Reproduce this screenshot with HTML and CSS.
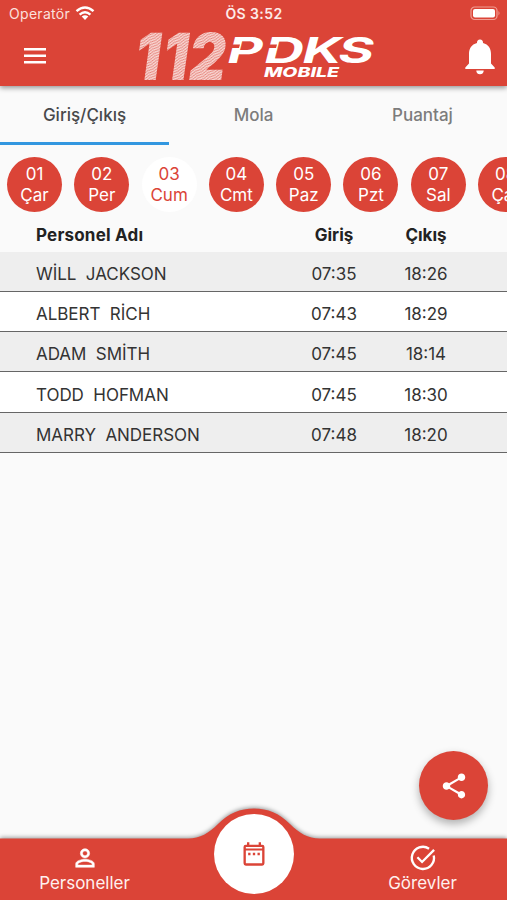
FILE: index.html
```html
<!DOCTYPE html>
<html lang="tr">
<head>
<meta charset="utf-8">
<meta name="viewport" content="width=device-width, initial-scale=1">
<title>112 PDKS Mobile</title>
<link rel="stylesheet" href="styles.css">
</head>
<body>
<div class="app">
  <header class="topbar">
    <div class="status">
      <div class="carrier"><span>Operatör</span>
        <svg width="20" height="15" viewBox="0 0 20 15" fill="none" stroke="#fff" stroke-width="2.4"><path d="M1.500 5.200Q10 -2.400 18.500 5.200M4.600 8.600Q10 3.900 15.400 8.600"/><path d="M10 14L6.700 10.600Q10 7.800 13.300 10.600Z" fill="#fff" stroke="none"/></svg>
      </div>
      <span class="clock">ÖS 3:52</span>
      <svg class="battery" width="31" height="15" viewBox="0 0 31 15"><rect x="1" y="1" width="26" height="12.5" rx="3.6" fill="none" stroke="#f09d94" stroke-width="1.2"/><rect x="3" y="3" width="22" height="8.500" rx="2" fill="#fff"/><path d="M28.500 5Q30.500 7.200 28.500 9.500Z" fill="#f09d94"/></svg>
    </div>
    <div class="brandrow">
      <svg class="menu" width="22" height="16" viewBox="0 0 22 16" fill="#fff"><path d="M0 0h22v2.500H0zM0 6.500h22V9H0zM0 13h22v2.500H0z"/></svg>
      <svg class="logo" width="244" height="54" viewBox="0 0 244 54">
        <defs>
          <pattern id="ridges" width="12" height="2.6" patternUnits="userSpaceOnUse" patternTransform="rotate(-28)"><rect width="12" height="2.6" fill="#f8d6d2"/><path d="M0 1.300Q3 .1 6 1.300T12 1.300" fill="none" stroke="#e0695f" stroke-width=".8"/></pattern>
        </defs>
        <text class="digits" transform="translate(-1.500 49.500) skewX(-8) scale(.88 1)" x="-3.500 28 58" y="0" fill="url(#ridges)">112</text>
        <text class="pdks" transform="translate(90.500 32.500) scale(1.56 1)" x="0 23.700 48 71" y="0">PDKS</text>
        <path d="M90 14.500H103L102 18H89ZM127 14.500H140L139 18H126Z" fill="#db4437"/>
        <text class="mobile" x="127" y="46.500" textLength="75" lengthAdjust="spacingAndGlyphs">MOBILE</text>
      </svg>
      <svg class="bell" width="30" height="36" viewBox="0 0 30 36" fill="#fff"><path d="M15 .5A3 3 0 0 1 18 4C23.500 5.400 26 9.500 26 15V24.500L29.700 28.500V30H.3V28.500L4 24.500V15C4 9.500 6.500 5.400 12 4A3 3 0 0 1 15 .5ZM11.300 31.500H18.700A3.700 3.700 0 0 1 11.300 31.500Z"/></svg>
    </div>
  </header>
  <nav class="tabs"><span class="tab active">Giriş/Çıkış</span><span class="tab">Mola</span><span class="tab">Puantaj</span></nav>
  <div class="days">
    <div class="day"><span>01</span><span>Çar</span></div>
    <div class="day"><span>02</span><span>Per</span></div>
    <div class="day selected"><span>03</span><span>Cum</span></div>
    <div class="day"><span>04</span><span>Cmt</span></div>
    <div class="day"><span>05</span><span>Paz</span></div>
    <div class="day"><span>06</span><span>Pzt</span></div>
    <div class="day"><span>07</span><span>Sal</span></div>
    <div class="day"><span>08</span><span>Çar</span></div>
  </div>
  <main class="list">
    <div class="row head"><span>Personel Adı</span><span>Giriş</span><span>Çıkış</span></div>
    <div class="row"><span>WİLL&nbsp; JACKSON</span><span>07:35</span><span>18:26</span></div>
    <div class="row"><span>ALBERT&nbsp; RİCH</span><span>07:43</span><span>18:29</span></div>
    <div class="row"><span>ADAM&nbsp; SMİTH</span><span>07:45</span><span>18:14</span></div>
    <div class="row"><span>TODD&nbsp; HOFMAN</span><span>07:45</span><span>18:30</span></div>
    <div class="row"><span>MARRY&nbsp; ANDERSON</span><span>07:48</span><span>18:20</span></div>
  </main>
  <button class="share" aria-label="Paylaş"><svg width="30" height="30" viewBox="0 0 24 24" fill="#fff"><path d="M18 16.080c-.76 0-1.440.3-1.960.77L8.910 12.700c.05-.23.090-.46.090-.7s-.04-.47-.09-.7l7.050-4.110c.54.5 1.250.81 2.040.81 1.660 0 3-1.340 3-3s-1.340-3-3-3-3 1.340-3 3c0 .24.040.47.090.7L8.040 9.810C7.500 9.310 6.790 9 6 9c-1.660 0-3 1.340-3 3s1.340 3 3 3c.79 0 1.500-.31 2.040-.81l7.120 4.160c-.05.21-.08.43-.08.650 0 1.610 1.310 2.920 2.920 2.920s2.920-1.310 2.920-2.920-1.310-2.920-2.920-2.920z"/></svg></button>
  <footer class="bottom">
    <svg class="hump" width="507" height="96" viewBox="0 0 507 96"><path d="M0 34.500H188C200 34.500 209 29 218 20C229 9 240 4.500 254 4.500S279 9 290 20C299 29 308 34.500 320 34.500H507V96H0Z" fill="#db4437"/></svg>
    <div class="item"><svg width="28" height="28" viewBox="0 0 24 24" fill="#fff" stroke="#fff" stroke-width=".4"><path d="M12 5.900a2.100 2.100 0 1 1 0 4.200 2.100 2.100 0 0 1 0-4.200m0 9c2.970 0 6.100 1.460 6.100 2.100v1.100H5.900V17c0-.64 3.130-2.100 6.100-2.100M12 4C9.790 4 8 5.790 8 8s1.790 4 4 4 4-1.790 4-4-1.790-4-4-4zm0 9c-2.670 0-8 1.340-8 4v3h16v-3c0-2.660-5.330-4-8-4z"/></svg><span>Personeller</span></div>
    <div class="center"><svg width="28" height="28" viewBox="0 0 24 24" fill="#db4437"><path fill-rule="evenodd" d="M7 11h2v2H7zm4 0h2v2h-2zm4 0h2v2h-2zM19 4h-1V2h-2v2H8V2H6v2H5a2 2 0 0 0-2 2v14a2 2 0 0 0 2 2h14a2 2 0 0 0 2-2V6a2 2 0 0 0-2-2zM19 20H5V9h14zM19 7.300H5V6h14z"/></svg></div>
    <div class="item"><svg width="28" height="28" viewBox="0 0 24 24" fill="none" stroke="#fff" stroke-width="2"><path d="M21.200 9.800A9.500 9.500 0 1 1 17.200 4M7.200 11.400l4 4L21.500 5"/></svg><span>Görevler</span></div>
  </footer>
</div>
</body>
</html>
```

FILE: styles.css
```css
* { box-sizing: border-box; }
body { margin: 0; font-family: Inter, "Liberation Sans", sans-serif; background: #fafafa; color: #333; }
.app { width: 507px; height: 900px; overflow: hidden; position: relative; display: flex; flex-direction: column; }
.topbar { height: 86px; flex: none; background: #db4437; box-shadow: 0 2px 5px rgba(0,0,0,.4); color: #fff; z-index: 1; }
.status { height: 28px; display: grid; grid-template-columns: 1fr auto 1fr; align-items: center; padding: 0 8px 1px 9px; font-size: 14px; }
.carrier { display: flex; gap: 5px; align-items: center; color: #fbe0dd; letter-spacing: .3px; }
.clock { font-weight: 600; color: #fdeae8; letter-spacing: .4px; }
.battery { justify-self: end; margin-right: -2px; }
.brandrow { height: 58px; display: flex; padding: 2px 12px 0 24px; }
.menu { margin-top: 18px; }
.logo { margin-left: 91px; overflow: visible; }
.bell { margin: 9px 0 0 auto; }
.digits { font: 900 65px Inter, sans-serif; }
.pdks { font: italic 700 35px Inter, sans-serif; fill: #fff; }
.mobile { font: italic 800 13.5px Inter, sans-serif; fill: #fff; }
.tabs { height: 59px; flex: none; display: flex; }
.tab { flex: 1; display: flex; align-items: center; justify-content: center; padding-top: 1px; font-size: 17px; font-weight: 500; color: #7c7c7c; border-bottom: 3px solid transparent; }
.active { color: #48494b; border-color: #3297e0; }
.days { height: 72px; flex: none; display: flex; gap: 12.3px; padding: 12px 0 0 7px; overflow: hidden; }
.day { width: 55px; height: 55px; flex: none; border-radius: 50%; background: #db4437; color: #fff; display: flex; flex-direction: column; align-items: center; justify-content: center; padding-top: 1px; font-size: 17px; line-height: 21px; }
.selected { background: #fff; color: #db4437; }
.list { flex: none; }
.row { height: 40.3px; display: grid; grid-template-columns: 288px 92px 92px; padding-left: 36px; align-items: center; font-size: 17px; border-bottom: 1px solid #666; padding-top: 5px; background: #eee; }
.row:nth-child(odd) { background: #fff; }
.row span:first-child { letter-spacing: -.04px; }
.row span + span { text-align: center; margin-left: -72px; }
.head.row { height: 34.6px; background: transparent; border: 0; padding-top: 1.4px; font-weight: 700; color: #222; }
.head.row span:first-child { letter-spacing: .2px; }
.share { position: absolute; left: 419px; top: 751px; width: 69px; height: 69px; border: 0; border-radius: 50%; background: #db4437; box-shadow: 0 4px 8px rgba(0,0,0,.3); display: grid; place-items: center; }
.bottom { position: absolute; left: 0; right: 0; bottom: 0; height: 62px; display: grid; grid-template-columns: repeat(3, 1fr); color: #fff; }
.hump { position: absolute; left: 0; bottom: 0; filter: drop-shadow(0 -1px 2px rgba(0,0,0,.4)); }
.item { position: relative; display: flex; flex-direction: column; align-items: center; padding-top: 6px; font-size: 17px; line-height: 22px; color: #fff0ee; }
.center { position: relative; justify-self: center; width: 80px; height: 80px; margin-top: -24px; border-radius: 50%; background: #fff; display: grid; place-items: center; }
```
